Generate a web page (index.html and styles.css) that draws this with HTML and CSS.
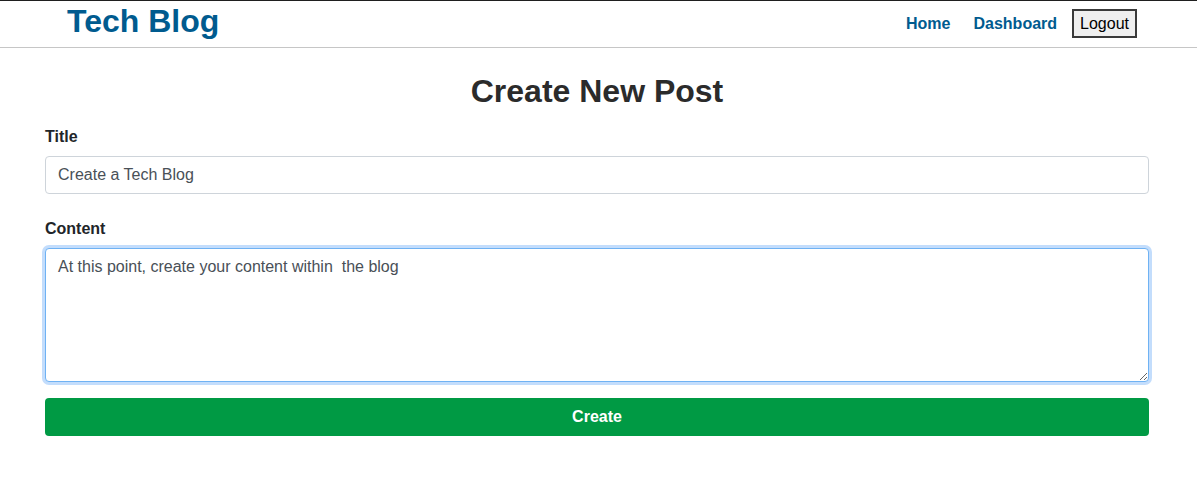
FILE: index.html
```html
<!DOCTYPE html>
<html lang="en">
<head>
<meta charset="utf-8">
<title>Tech Blog</title>
<link rel="stylesheet" href="styles.css">
</head>
<body>
<header class="site-header">
  <a class="brand" href="#">Tech Blog</a>
  <nav class="nav">
    <a class="nav-link" href="#">Home</a>
    <a class="nav-link" href="#">Dashboard</a>
    <button class="logout" type="button">Logout</button>
  </nav>
</header>
<main class="main">
  <h1 class="page-title">Create New Post</h1>
  <form class="post-form">
    <div class="form-group first">
      <label class="form-label" for="title">Title</label>
      <input class="form-control" id="title" type="text" value="Create a Tech Blog">
    </div>
    <div class="form-group">
      <label class="form-label" for="content">Content</label>
      <textarea class="form-control textarea focused" id="content" rows="5">At this point, create your content within  the blog</textarea>
    </div>
    <button class="btn-create" type="button">Create</button>
  </form>
</main>
</body>
</html>
```
FILE: styles.css
```css
* { box-sizing: border-box; }
html, body { margin: 0; padding: 0; }
body {
  font-family: "Liberation Sans", Arial, Helvetica, sans-serif;
  font-size: 16px;
  line-height: 1.5;
  color: #212529;
  background: #fff;
  border-top: 1px solid #1f1f1f;
}
.site-header {
  height: 47px;
  display: flex;
  align-items: center;
  justify-content: space-between;
  padding: 0 60px 0 67px;
  border-bottom: 1px solid #c6c6c6;
}
.brand {
  font-size: 32px;
  font-weight: 700;
  color: #005b8f;
  text-decoration: none;
  line-height: 1;
  margin-top: -6px;
}
.nav {
  display: flex;
  align-items: center;
  margin-top: -1px;
}
.nav-link {
  font-weight: 700;
  color: #005b8f;
  text-decoration: none;
  margin-right: 23px;
}
.nav-link:last-of-type { margin-right: 15px; }
.logout {
  font-family: "Liberation Sans", Arial, sans-serif;
  font-size: 16px;
  background: #efefef;
  color: #000;
  border: 2px solid #3a3a3a;
  padding: 0 6px;
  height: 29px;
  border-radius: 0;
}
.main {
  padding: 0 48px 0 45px;
}
.page-title {
  text-align: center;
  font-size: 32px;
  font-weight: 700;
  line-height: 1.2;
  color: #2b2b2b;
  margin: 24px 0 15px;
}
.form-group { margin-bottom: 16px; }
.form-group.first { margin-bottom: 23px; }
.form-label {
  display: block;
  font-weight: 700;
  margin-bottom: 7px;
}
.form-control {
  display: block;
  width: 100%;
  height: 38px;
  padding: 6px 12px;
  font-family: "Liberation Sans", Arial, sans-serif;
  font-size: 16px;
  line-height: 1.5;
  color: #495057;
  background: #fff;
  border: 1px solid #ced4da;
  border-radius: 4px;
  outline: none;
}
.textarea {
  height: 134px;
  resize: vertical;
}
.focused {
  border-color: #6fb2f3;
  box-shadow: 0 0 0 3px #c3ddfc;
}
.btn-create {
  display: block;
  width: 100%;
  height: 38px;
  border: none;
  border-radius: 4px;
  background: #009a44;
  color: #fff;
  font-family: "Liberation Sans", Arial, sans-serif;
  font-weight: 700;
  font-size: 16px;
}
```
